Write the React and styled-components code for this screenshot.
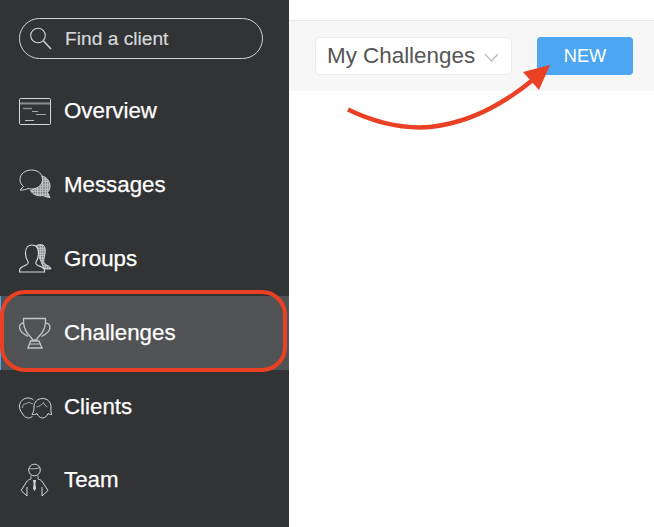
import React from 'react';
import styled, { createGlobalStyle } from 'styled-components';

const Global = createGlobalStyle`
  html, body { margin: 0; padding: 0; background: #fff; }
  body { font-family: "Liberation Sans", Arial, sans-serif; overflow: hidden; }
`;

const Page = styled.div`
  position: relative;
  display: flex;
  width: 654px;
  height: 527px;
  overflow: hidden;
`;

const Sidebar = styled.aside`
  width: 289px;
  flex: none;
  background: #323335;
  display: flex;
  flex-direction: column;
  padding-top: 18px;
  box-sizing: border-box;
`;

const Search = styled.div`
  display: flex;
  align-items: center;
  gap: 13px;
  width: 244px;
  height: 41px;
  margin: 0 0 15.6px 19px;
  padding-left: 10px;
  box-sizing: border-box;
  border: 1px solid #d3d5d7;
  border-radius: 21px;
  color: #d5d8dc;
  font-size: 19.2px;
  -webkit-text-stroke: 0.2px #d5d8dc;
`;

const SearchIcon = styled.svg`
  width: 22px;
  height: 23px;
  flex: none;
  fill: none;
  stroke: #cfd2d5;
  stroke-width: 1.1;
`;

const NavRow = styled.div`
  display: flex;
  align-items: center;
  gap: 12px;
  height: 73.8px;
  flex: none;
  box-sizing: border-box;
  color: #fff;
  font-size: 22.3px;
  -webkit-text-stroke: 0.25px #fff;
  background: ${p => (p.$active ? '#515254' : 'transparent')};
  border-left: ${p => (p.$active ? '1px solid #4ca6f1' : '0')};
  padding-left: ${p => (p.$active ? '18px' : '19px')};
`;

const Icon = styled.svg`
  width: 33px;
  height: 34px;
  flex: none;
  fill: none;
  stroke: #d6d7d8;
  stroke-width: 1;
`;

const Main = styled.main`
  flex: 1;
  display: flex;
  flex-direction: column;
  padding-top: 20px;
`;

const Toolbar = styled.div`
  height: 71px;
  box-sizing: border-box;
  background: #f7f7f7;
  border-top: 1px solid #e9e9e9;
  display: flex;
  align-items: center;
  padding: 0 21px 0 26px;
  gap: 25px;
`;

const Select = styled.div`
  width: 197px;
  height: 38px;
  box-sizing: border-box;
  background: #fff;
  border: 1px solid #ececec;
  border-radius: 5px;
  display: flex;
  align-items: center;
  justify-content: space-between;
  padding: 0 12px 0 11px;
  color: #555;
  font-size: 22.4px;
`;

const Chevron = styled.svg`
  width: 15px;
  height: 9px;
  fill: none;
  stroke: #b9b9b9;
  stroke-width: 1.2;
  margin-top: 3px;
`;

const NewButton = styled.div`
  width: 96px;
  height: 38px;
  background: #4ca6f1;
  border-radius: 4px;
  color: #fff;
  font-size: 18.2px;
  display: flex;
  align-items: center;
  justify-content: center;
`;

const Highlight = styled.div`
  position: absolute;
  left: 0;
  top: 290px;
  width: 287px;
  height: 82px;
  box-sizing: border-box;
  border: 4px solid #ea4124;
  border-radius: 25px;
`;

const Arrow = styled.svg`
  position: absolute;
  left: 340px;
  top: 55px;
  width: 230px;
  height: 85px;
  fill: none;
`;

export default function App() {
  return (
    <Page>
      <Global />
      <Sidebar>
        <Search>
          <SearchIcon viewBox="0 0 22 23">
            <circle cx="8" cy="8.500" r="7.300" />
            <path d="M13.500 14L21 22" strokeWidth="1.500" />
          </SearchIcon>
          Find a client
        </Search>
        <NavRow>
          <Icon viewBox="0 0 33 34">
            <rect x="0.500" y="4.500" width="31" height="26" rx="1" />
            <path d="M1 9.500h30" stroke="#8b8c8d" strokeWidth="2" />
            <path d="M4 14.500h9" stroke="#8b8c8d" strokeWidth="1.500" />
            <path d="M13 17.500h6M17 20.500h10" stroke="#a5a6a7" strokeWidth="1.200" />
            <path d="M6 26.500h9" stroke="#bcbdbe" />
          </Icon>
          Overview
        </NavRow>
        <NavRow>
          <Icon viewBox="0 0 33 34">
            <defs>
              <pattern id="msgDots" width="2.500" height="2.500" patternUnits="userSpaceOnUse">
                <circle cx="1.250" cy="1.250" r="0.700" fill="#a9aaab" />
              </pattern>
            </defs>
            <path d="M23 8c4.500 1 8 5 8 10 0 3-1 5-2.500 6.500l2.500 5c-3-.3-5.500-1-7-2-5 1-10-.5-12.500-5 5-1 11.500-6 11.500-14.500z" fill="url(#msgDots)" stroke="#cfd0d1" />
            <path d="M12.500 2C6 2 1 6 1 11.500c0 3 1.500 5.500 3.500 7L1 22c3 .3 6-.5 8-1.500 1 .3 2.500 .5 3.500 .5 6 0 11-4 11-9.500S19 2 12.500 2z" fill="#323335" />
          </Icon>
          Messages
        </NavRow>
        <NavRow>
          <Icon viewBox="0 0 33 34">
            <defs>
              <pattern id="grpDots" width="2.500" height="2.500" patternUnits="userSpaceOnUse">
                <circle cx="1.250" cy="1.250" r="0.700" fill="#b5b6b7" />
              </pattern>
            </defs>
            <path d="M17 4c2-1.500 5-2 7-1 2.500 1.500 2.500 5 2 9-.4 3-1.300 5-1.300 7 0 2 1.300 3 3 4 2 1.200 4.300 2 4.300 4h-7l-8-20z" fill="url(#grpDots)" stroke="#cfd0d1" />
            <path d="M0.500 30v-1.500c0-3 3-4 6.500-5.500 2-.8 2.500-2 2-3.500-1.500-2-2.500-5-2.500-8.500C6.500 6 9 3 13 3s6.500 3 6.500 8.500c0 3.500-1 6.500-2.500 8.500-.5 1.500 0 2.700 2 3.500 3.500 1.500 6.500 2.500 6.500 5V30z" fill="#323335" strokeWidth="1.200" />
          </Icon>
          Groups
        </NavRow>
        <NavRow $active>
          <Icon viewBox="0 0 33 34">
            <path d="M4.500 2.500h22c.3 6-1 11-4 15-2 2.500-4.500 4-5 6.500h-4c-.5-2.500-3-4-5-6.500-3-4-4.300-9-4-15z" strokeWidth="1.300" stroke="#c4c5c6" />
            <path d="M4.500 7C2 7 .5 9 .5 11.500c0 4 4 6.500 8.500 9M26.500 7c2.500 0 4.500 2 4.500 4.500 0 4-3.500 6.500-8.500 9" strokeWidth="1.300" stroke="#c4c5c6" />
            <path d="M11.500 25h8.500l3 7H9z" strokeWidth="1.300" stroke="#c4c5c6" />
            <path d="M10.500 28h10.500" stroke="#c4c5c6" />
          </Icon>
          Challenges
        </NavRow>
        <NavRow>
          <Icon viewBox="0 0 33 34">
            <path d="M14.500 10C13 8.700 11 8 9 8 4.500 8 .5 11.500 .5 16c0 3 1 5 2.500 7 1.500 3 4 5 6.500 5 1.500 0 3-.7 4-2" />
            <path d="M3.500 18c0-1.500 .5-3 1.500-4 2 0 4-1 5-2 1 1 2.500 1.700 4 1.800" stroke="#a9aaab" />
            <path d="M23.500 8.500c-5 0-8.500 3.500-8.500 8.500 0 3-.5 5.500-2 7.500 2 .3 3.500 0 5-1 1 2.500 3 4.500 5.500 4.500s4.500-2 5.500-4.500c1.500 1 3 1.200 4 1-1.500-2-1-4.500-1-7.500 0-5-3.500-8.500-8.500-8.500z" />
            <path d="M17.500 17c3-.5 6-2.500 7-4.500 .5 2 2 3.500 4 4.500" stroke="#a9aaab" />
          </Icon>
          Clients
        </NavRow>
        <NavRow>
          <Icon viewBox="0 0 33 34">
            <circle cx="15.500" cy="7" r="5.800" />
            <path d="M10 5.500c3 .5 7.500 .5 11-1M12 12.500v3.500M19 12.500v3.500" stroke="#b5b6b7" />
            <path d="M12 16c-2.500 .7-3.500 1.500-4.500 3L2 27.500 8 33v-9M19 16c2.500 .7 3.500 1.500 4.500 3l5.500 8.500-6 5.500v-9" />
            <path d="M14 17h3l-.6 4 .6 4.500-1.500 2.500-1.500-2.500 .6-4.500z" fill="#d6d7d8" stroke="none" />
          </Icon>
          Team
        </NavRow>
      </Sidebar>
      <Main>
        <Toolbar>
          <Select>
            My Challenges
            <Chevron viewBox="0 0 15 9"><path d="M1 1l6.500 7L14 1" /></Chevron>
          </Select>
          <NewButton>NEW</NewButton>
        </Toolbar>
      </Main>
      <Highlight />
      <Arrow viewBox="0 0 230 85">
        <path d="M8 54.500C40 70 65 74 90 72 130 68 165 48 194 24" stroke="#ea4124" strokeWidth="4.500" />
        <path d="M210 10L183 17l16 18z" fill="#ea4124" />
      </Arrow>
    </Page>
  );
}
